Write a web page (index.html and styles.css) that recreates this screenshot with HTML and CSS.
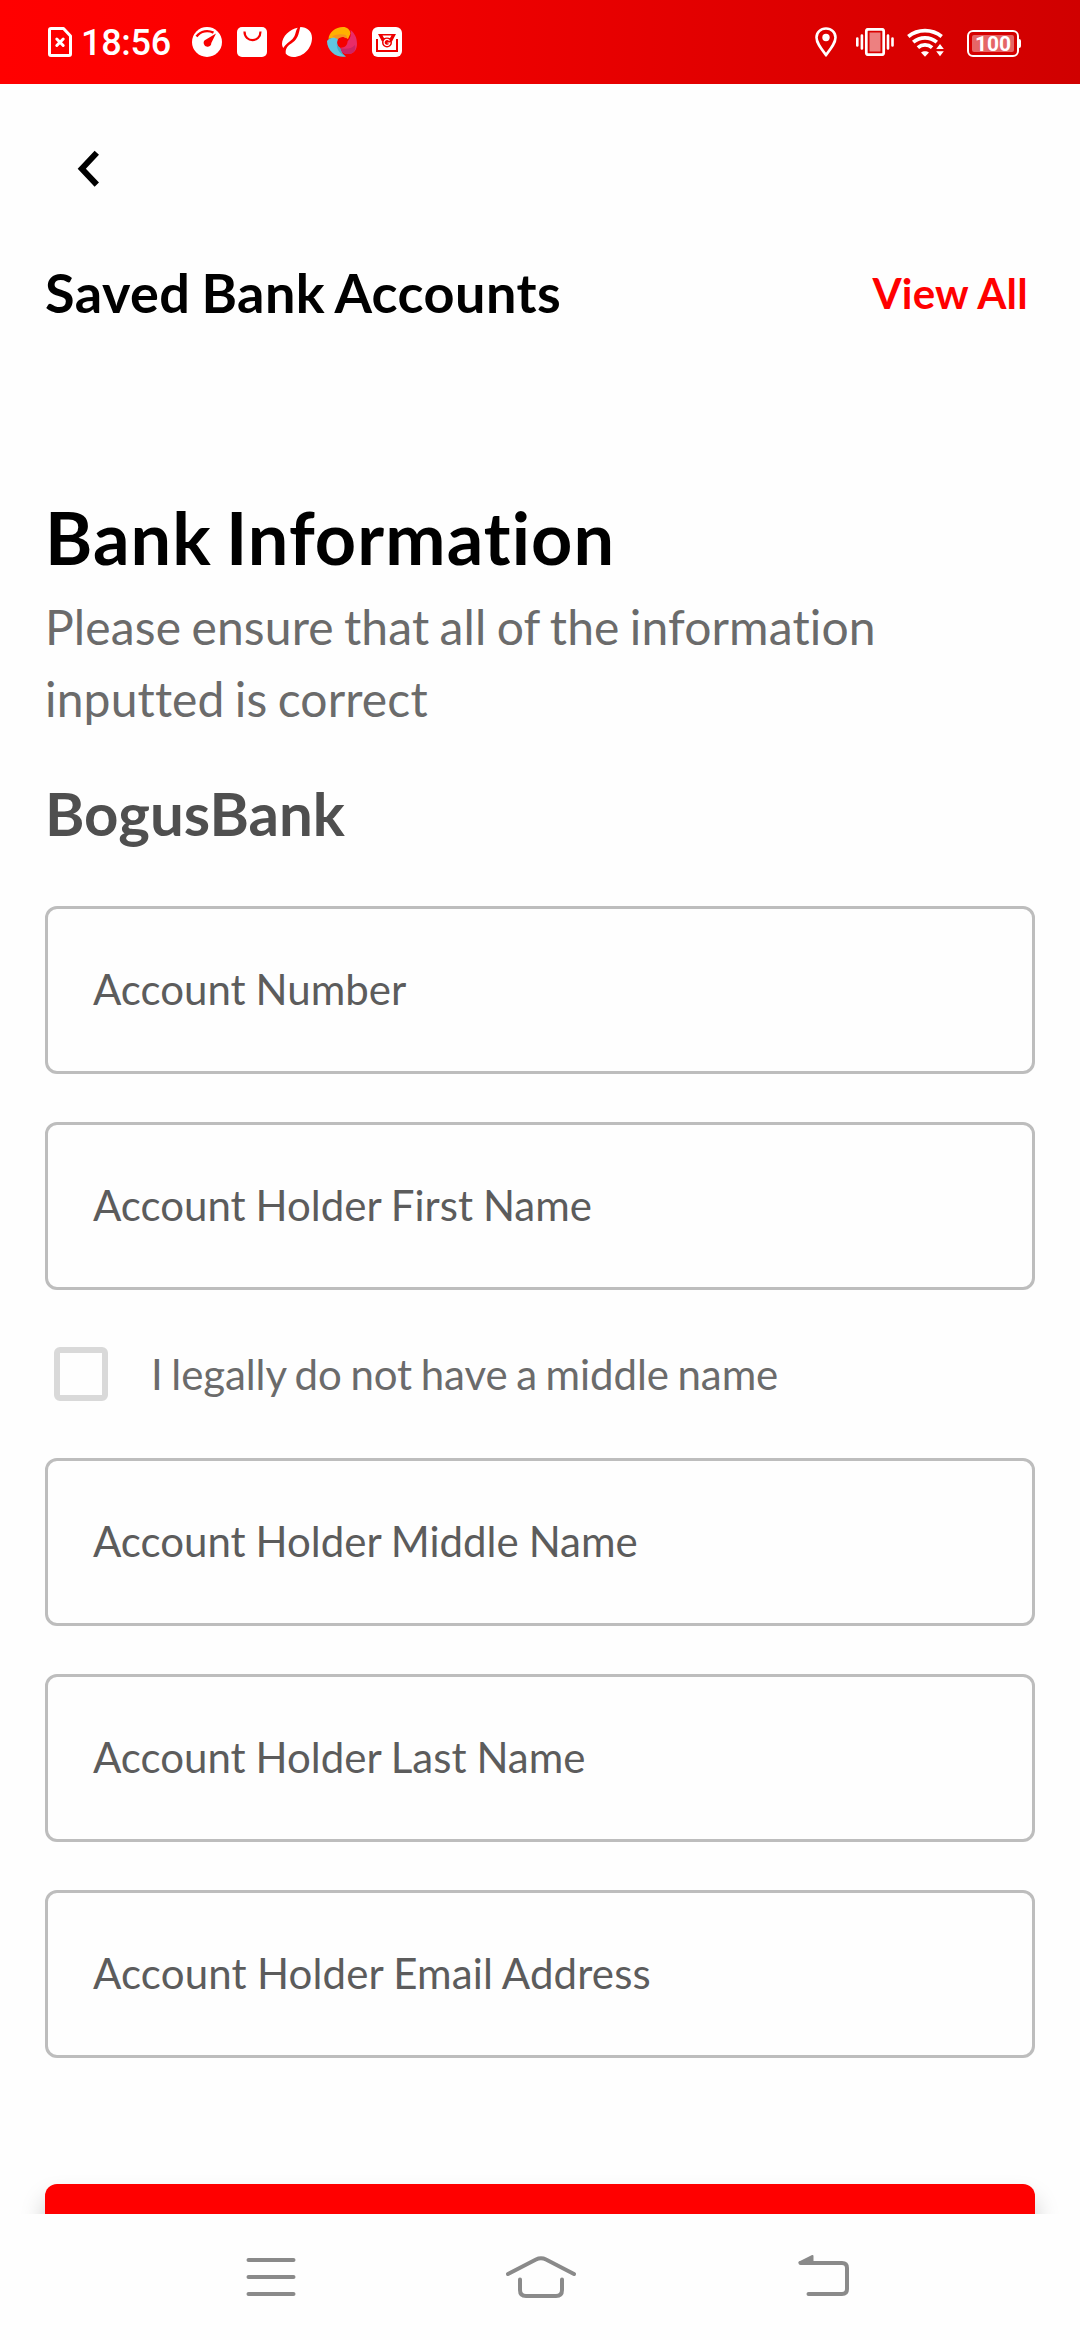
FILE: index.html
```html
<!DOCTYPE html>
<html lang="en">
<head>
<meta charset="utf-8">
<title>Bank Information</title>
<link rel="stylesheet" href="styles.css">
</head>
<body>
<div class="screen">
  <header class="status-bar">
    <div class="status-left">
      <svg class="sim" width="24" height="30" viewBox="0 0 24 30" fill="none" stroke="#fff" stroke-width="3" stroke-linecap="round">
        <path stroke-linejoin="round" d="M3 1.5H15.5L22.5 9V27Q22.5 28.5 21 28.5H3Q1.500 28.500 1.500 27V3Q1.500 1.500 3 1.500Z"/>
        <path d="M8.800 12L15.200 18.500M15.200 12L8.800 18.500"/>
      </svg>
      <span class="clock">18:56</span>
      <div class="notifications">
        <svg width="30" height="30" viewBox="0 0 30 30">
          <circle cx="15" cy="15" r="15" fill="#fff"/>
          <path d="M4.500 9.500C9 3.500 16 3 21.500 5.600" fill="none" stroke="#f90000" stroke-width="2.400"/>
          <path d="M24 6.500L19.300 16A3.800 3.800 0 1 1 14 12.500Z" fill="#f90000"/>
        </svg>
        <svg width="30" height="30" viewBox="0 0 30 30">
          <rect width="30" height="30" rx="5" fill="#fff"/>
          <path d="M7.500 4.500C7.500 16 23.500 16 23.500 4.500" fill="none" stroke="#f70000" stroke-width="2.200"/>
        </svg>
        <svg width="30" height="30" viewBox="0 0 30 30" fill="#fff">
          <path d="M15.800.8C8 2 0 9.500 0 17C0 18.500.4 19.800 1.200 21C3.500 17 7 15.500 10.500 12C14 8.500 13.200 4 15.800.8Z"/>
          <path d="M18.300 0C25 0 30 4 30 11C30 21 21.500 30 11.500 30C8 30 5.500 28.500 3.700 26.500C3 19 8.500 17.500 12.500 14C16.500 10 17 5 18.300 0Z"/>
        </svg>
        <svg width="30" height="30" viewBox="0 0 30 30">
          <path fill="#ffb100" d="M1.500 12C2 5 8.500 0 16 0C20 0 23 2.500 23.500 6.500L21 12C16 8.500 12 10 10.500 12.500C7.500 10.500 4.500 10.500 1.500 12Z"/>
          <path fill="#f7921e" d="M5 9.500C9 7 14 6.500 19 8L21 12C16 8.500 12 10 10.500 12.500C9 11 7.500 10 5 9.500Z"/>
          <path fill="#e82c69" d="M23.500 3C28 6.500 30 11 30 17C30 22 27.500 26.500 22 27C17 27.500 13.500 25 12 20.500C17 21.500 20.500 18.500 20.500 14.500C23.500 11.500 24.500 7 23.500 3Z"/>
          <path fill="#cc2565" d="M12 20.500C18 23 24 22 28 18C29 23 27 26.500 22 27C17 27.500 13.500 25 12 20.500Z"/>
          <path fill="#61c6df" d="M0 14C3 10 8 10 11 12.500C9 16 10.500 19.500 13 21C14 25 16 28 19 29.500C11 31.500 0 25 0 14Z"/>
          <path fill="#45abc7" d="M11 12.500C9 16 10.500 19.500 13 21C14 25 16 28 19 29.500C12 27 7.500 20 11 12.500Z"/>
        </svg>
        <svg width="30" height="30" viewBox="0 0 30 30">
          <rect width="30" height="30" rx="6" fill="#fff"/>
          <path d="M5 12V24H25V12" fill="none" stroke="#ee0000" stroke-width="2"/>
          <path d="M6 7H24L20 14.500H10Z" fill="#ee0000"/>
          <path d="M10.500 8.500H19.500L18 11H12Z" fill="#fff"/>
          <circle cx="15" cy="15.500" r="5" fill="#ee0000"/>
          <path d="M17.500 13.700A3 3 0 1 0 18 16H15.500" fill="none" stroke="#fff" stroke-width="1.200"/>
        </svg>
      </div>
    </div>
    <div class="status-right">
      <svg class="pin" width="22" height="30" viewBox="0 0 22 30">
        <path d="M11 1.500C5.500 1.500 1.500 5.500 1.500 10.500C1.500 16 6 21.500 11 28C16 21.500 20.500 16 20.500 10.500C20.500 5.500 16.500 1.500 11 1.500Z" fill="none" stroke="#fff" stroke-width="2.600"/>
        <circle cx="11" cy="10.500" r="3.700" fill="#fff"/>
      </svg>
      <svg class="vibrate" width="38" height="28" viewBox="0 0 38 28">
        <g stroke="#fff" stroke-width="2.600" stroke-linecap="round"><path d="M1.300 10.500V17.500M5.900 7.500V20.500M32 7.500V20.500M36.500 10.500V17.500"/></g>
        <rect x="10.300" y="1.300" width="17.400" height="25.400" rx="2" fill="none" stroke="#fff" stroke-width="2.700"/>
        <rect x="13.500" y="4.500" width="11" height="19" fill="#fff" fill-opacity=".5"/>
      </svg>
      <svg class="wifi" width="38" height="30" viewBox="0 0 38 30">
        <g fill="none" stroke="#fff" stroke-width="3.700"><path d="M1.300 8.500C11 .6 25 .6 34.700 8.500M6.200 14.200C13 8.300 23 8.300 29.800 14.200M10.900 19.600C15 16 21 16 25.100 19.600"/></g>
        <path fill="#fff" d="M14 24.500C16.200 22.700 19.800 22.700 22 24.500L18 28.700Z"/>
        <path fill="#fff" d="M33 16L36.800 21H29.200ZM29.200 23.300H36.800L33 28.300Z" stroke="#da0000" stroke-width="2" paint-order="stroke"/>
      </svg>
      <div class="battery"><span class="battery-level">100</span></div>
    </div>
  </header>

  <main class="content">
    <button class="back" aria-label="Back">
      <svg width="24" height="38" viewBox="0 0 24 38" fill="none" stroke="#000" stroke-width="6"><path d="M20.800 2.800L5.800 18.700L20.800 34.600"/></svg>
    </button>
    <div class="saved">
      <h2 class="saved-title">Saved Bank Accounts</h2>
      <a class="view-all">View All</a>
    </div>
    <h1 class="title">Bank Information</h1>
    <p class="subtitle">Please ensure that all of the information inputted is correct</p>
    <h3 class="bank">BogusBank</h3>
    <form class="form">
      <div class="field">Account Number</div>
      <div class="field">Account Holder First Name</div>
      <label class="check-row"><span class="checkbox"></span>I legally do not have a middle name</label>
      <div class="field">Account Holder Middle Name</div>
      <div class="field">Account Holder Last Name</div>
      <div class="field field-email">Account Holder Email Address</div>
      <div class="submit"></div>
    </form>
  </main>

  <nav class="nav">
    <svg width="90" height="60" viewBox="0 0 90 60" fill="none" stroke="#8a8a8a" stroke-width="4" stroke-linecap="round"><path d="M23.500 13H68.500M23.500 30H68.500M23.500 47H68.500"/></svg>
    <svg width="90" height="60" viewBox="0 0 90 60" fill="none" stroke="#8a8a8a" stroke-width="4" stroke-linecap="round"><path d="M13 27L41 12.500Q46 10 51 12.500L79 27M25 32.500V43Q25 49 31 49H61Q67 49 67 43V32.500"/></svg>
    <svg width="90" height="60" viewBox="0 0 90 60" fill="none" stroke="#8a8a8a" stroke-width="4" stroke-linecap="round"><path d="M35.500 16H77Q82 16 82 21V42Q82 47 77 47H43.500"/><path d="M34.500 15.500L47.500 9V16Z" fill="#8a8a8a" stroke-width="2" stroke-linejoin="round"/></svg>
  </nav>
</div>
</body>
</html>
```
FILE: styles.css
```css
* { box-sizing: border-box; margin: 0; padding: 0; }
body { background: #fefefe; font-family: Lato, sans-serif; font-variant-ligatures: none; color: #000; }
.screen { width: 1080px; height: 2340px; display: flex; flex-direction: column; overflow: hidden; }
svg { display: block; flex: none; }

.status-bar {
  flex: none; height: 84px; padding: 0 61px 0 48px;
  display: flex; justify-content: space-between; align-items: center;
  background: linear-gradient(90deg, #ff0000 0%, #fa0000 22%, #e40000 62%, #d00000 100%);
}
.status-left, .status-right, .notifications { display: flex; align-items: center; }
.clock { width: 120px; padding-left: 9px; font: 500 36px/42px Roboto, sans-serif; letter-spacing: -.3px; color: #fff; margin-top: 1px; }
.notifications { gap: 15px; }
.vibrate { margin-left: 19px; }
.wifi { margin-left: 13px; margin-top: 2px; }
.battery {
  position: relative; width: 52px; height: 27px; margin: 3px 0 0 22px; padding: 3px;
  border: 2px solid #fff; border-radius: 6px;
}
.battery::after {
  content: ""; position: absolute; left: 50px; top: 7px; width: 2px; height: 9px;
  background: #fff; border-radius: 0 2px 2px 0;
}
.battery-level {
  display: block; height: 17px; background: rgba(255, 255, 255, .4); border-radius: 2px;
  font: 700 21px/18px Roboto, sans-serif; color: #fff; text-align: center;
}

.content { flex: 1; min-height: 0; padding: 0 45px; overflow: hidden; }
.back { display: flex; width: 88px; height: 169px; padding: 66px 0 0 31px; border: 0; background: none; }
.saved { display: flex; justify-content: space-between; align-items: flex-start; height: 80px; padding-right: 7px; }
.saved-title { font-size: 54px; font-weight: 700; line-height: 79px; letter-spacing: .45px; word-spacing: -2.5px; white-space: nowrap; }
.view-all { font-size: 42px; font-weight: 700; line-height: 80px; letter-spacing: .25px; color: #ff0000; }
.title { margin-top: 159px; font-size: 72px; font-weight: 700; line-height: 90px; letter-spacing: 1.1px; word-spacing: -4.5px; white-space: nowrap; }
.subtitle { margin-top: 9px; font-size: 48px; line-height: 72px; letter-spacing: .14px; word-spacing: -2.2px; color: #6b6b6b; }
.bank { margin-top: 42px; font-size: 60px; font-weight: 700; line-height: 72px; color: #4f4f4f; }
.form { display: flex; flex-direction: column; gap: 48px; margin-top: 57px; }
.field {
  height: 168px; padding-left: 45px; border: 3px solid #bdbdbd; border-radius: 12px;
  font-size: 42px; line-height: 160px; word-spacing: -.8px; color: #5c5c5c;
}
.field-email { letter-spacing: .16px; }
.check-row { display: flex; align-items: center; height: 72px; padding-left: 9px; gap: 43px; font-size: 42px; letter-spacing: -.09px; word-spacing: -2px; color: #6b6b6b; }
.checkbox { width: 54px; height: 54px; border: 6px solid #d9d9d9; border-radius: 6px; }
.submit { height: 150px; margin-top: 78px; border-radius: 12px; background: #ff0000; box-shadow: 0 15px 24px rgba(0, 0, 0, .22); }

.nav { flex: none; height: 126px; padding: 0 135px; display: grid; grid-template-columns: repeat(3, 1fr); align-items: center; justify-items: center; }
```
